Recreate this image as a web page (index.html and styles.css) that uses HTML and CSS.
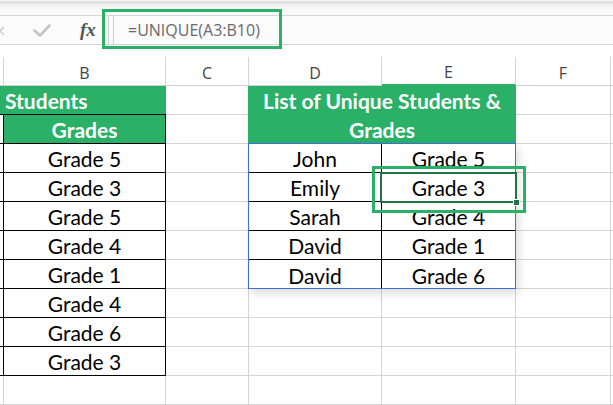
FILE: index.html
```html
<!DOCTYPE html>
<html>
<head>
<meta charset="utf-8">
<link rel="stylesheet" href="styles.css">
</head>
<body>
<div class="ribbon-edge"></div>
<div class="formula-bar">
  <div class="fb-icons">
    <svg class="ic-x" width="10" height="10" viewBox="0 0 10 10"><path d="M1 1 L9 9 M9 1 L1 9" stroke="#cfcfcf" stroke-width="1.6" fill="none"/></svg>
    <svg class="ic-check" width="18" height="13" viewBox="0 0 18 13"><path d="M1.5 6.5 L7 11.5 L16.5 1.5" stroke="#c4c4c4" stroke-width="2.6" fill="none" stroke-linecap="round" stroke-linejoin="round"/></svg>
    <span class="fx">fx</span>
  </div>
  <div class="fb-sep"></div>
  <div class="fb-input">=UNIQUE(A3:B10)</div>
  <div class="annot annot-formula"></div>
</div>
<div class="gap"></div>
<div class="col-headers">
  <div class="ch"></div>
  <div class="ch">B</div>
  <div class="ch">C</div>
  <div class="ch">D</div>
  <div class="ch ch-sel">E</div>
  <div class="ch">F</div>
  <div class="ch ch-last"></div>
</div>
<div class="sheet">
  <div class="students">Students</div>
  <div class="left-table">
    <div class="lt-a"></div><div class="lt-b lt-head">Grades</div>
    <div class="lt-a"></div><div class="lt-b">Grade 5</div>
    <div class="lt-a"></div><div class="lt-b">Grade 3</div>
    <div class="lt-a"></div><div class="lt-b">Grade 5</div>
    <div class="lt-a"></div><div class="lt-b">Grade 4</div>
    <div class="lt-a"></div><div class="lt-b">Grade 1</div>
    <div class="lt-a"></div><div class="lt-b">Grade 4</div>
    <div class="lt-a"></div><div class="lt-b">Grade 6</div>
    <div class="lt-a"></div><div class="lt-b">Grade 3</div>
  </div>
  <div class="ut-title">List of Unique Students &amp;<br>Grades</div>
  <div class="ut-data">
    <div class="ut-cell ut-name">John</div><div class="ut-cell">Grade 5</div>
    <div class="ut-cell ut-name">Emily</div><div class="ut-cell">Grade 3</div>
    <div class="ut-cell ut-name">Sarah</div><div class="ut-cell">Grade 4</div>
    <div class="ut-cell ut-name">David</div><div class="ut-cell">Grade 1</div>
    <div class="ut-cell ut-name ut-last">David</div><div class="ut-cell ut-last">Grade 6</div>
  </div>
  <div class="sel-cell"><div class="fill-handle"></div></div>
  <div class="annot annot-cell"></div>
</div>
</body>
</html>
```
FILE: styles.css
```css
* { box-sizing: border-box; }
html, body {
  margin: 0;
  padding: 0;
  width: 613px;
  height: 405px;
  overflow: hidden;
  background: #ffffff;
}
body {
  font-family: "Lato", "Open Sans", sans-serif;
  position: relative;
}

.ribbon-edge {
  height: 15px;
  background: linear-gradient(to bottom, #ffffff 0, #d8d8d8 2px, #ececec 4px, #f9f9f9 9px, #fdfdfd 15px);
}

.formula-bar {
  height: 30px;
  border-top: 1px solid #d5d5d5;
  border-bottom: 1px solid #d5d5d5;
  background: #fbfbfb;
  display: flex;
  align-items: stretch;
}
.fb-icons {
  width: 108px;
  display: flex;
  align-items: center;
}
.ic-x { margin-left: -5px; margin-top: 2px; }
.ic-check { margin-left: 28px; margin-top: 1px; }
.fx {
  margin-left: 29px;
  font-family: "Liberation Serif", serif;
  font-style: italic;
  font-weight: 700;
  font-size: 19px;
  color: #555555;
  line-height: 1;
  margin-top: -1px;
}
.fb-sep {
  width: 6px;
  border-left: 1px solid #cdcdcd;
  border-right: 1px solid #cdcdcd;
}
.fb-input {
  flex: 1;
  padding-left: 14px;
  display: flex;
  align-items: center;
  font-family: "Open Sans", sans-serif;
  font-size: 16px;
  color: #6a6a6a;
}

.annot {
  position: absolute;
  border: 3px solid #2bb067;
}
.annot-formula {
  left: 102px;
  top: 9px;
  width: 180px;
  height: 40px;
}

.gap { height: 12px; }

.col-headers {
  display: grid;
  grid-template-columns: 4px 162px 83px 133px 134px 95px 1fr;
  height: 29px;
}
.ch {
  border-right: 1px solid #d4d4d4;
  border-bottom: 1px solid #cfcfcf;
  display: flex;
  align-items: center;
  justify-content: center;
  font-family: "Open Sans", sans-serif;
  font-size: 16px;
  color: #444444;
  padding-top: 3px;
}
.ch-sel { border-bottom: 2px solid #2bb067; }
.ch-last { border-right: none; }

.sheet {
  position: relative;
  display: grid;
  grid-template-columns: 4px 162px 83px 133px 134px 95px 1fr;
  grid-template-rows: repeat(11, 29px);
  background:
    repeating-linear-gradient(to bottom, transparent 0 28px, #d4d4d4 28px 29px),
    linear-gradient(to right, transparent 0 3px, #d4d4d4 3px 4px, transparent 4px 165px, #d4d4d4 165px 166px, transparent 166px 248px, #d4d4d4 248px 249px, transparent 249px 381px, #d4d4d4 381px 382px, transparent 382px 515px, #d4d4d4 515px 516px, transparent 516px 610px, #d4d4d4 610px 611px, transparent 611px);
  font-size: 21px;
  color: #000000;
}

.students {
  grid-column: 1 / 3;
  grid-row: 1;
  background: #2bb067;
  border-bottom: 1px solid #000000;
  color: #ffffff;
  font-weight: 700;
  padding-left: 5px;
  display: flex;
  align-items: center;
}

.left-table {
  grid-column: 1 / 3;
  grid-row: 2 / 11;
  display: grid;
  grid-template-columns: 4px 162px;
  grid-auto-rows: 29px;
}
.lt-a {
  background: #ffffff;
  border-right: 1px solid #000000;
  border-bottom: 1px solid #000000;
}
.lt-b {
  background: #ffffff;
  border-right: 1px solid #000000;
  border-bottom: 1px solid #000000;
  display: flex;
  align-items: center;
  justify-content: center;
  padding-top: 1px;
}
.lt-head {
  background: #2bb067;
  color: #ffffff;
  font-weight: 700;
}

.ut-title {
  grid-column: 4 / 6;
  grid-row: 1 / 3;
  margin-left: -1px;
  background: #2bb067;
  color: #ffffff;
  font-weight: 700;
  text-align: center;
  line-height: 29px;
  padding-top: 0;
}

.ut-data {
  grid-column: 4 / 6;
  grid-row: 3 / 8;
  margin: -1px 0 0 -1px;
  border: 1px solid #3d70d2;
  background: #ffffff;
  box-shadow: 3px 5px 9px rgba(0, 0, 0, 0.13);
  display: grid;
  grid-template-columns: 133px 133px;
  grid-template-rows: repeat(4, 29px) 28px;
}
.ut-cell {
  border-bottom: 1px solid #000000;
  display: flex;
  align-items: center;
  justify-content: center;
  padding-top: 1px;
}
.ut-name { border-right: 1px solid #000000; }
.ut-last { border-bottom: none; padding-top: 2px; }

.sel-cell {
  grid-column: 5;
  grid-row: 4;
  margin: -1px -1px -1px -2px;
  border: 2px solid #217346;
  position: relative;
}
.fill-handle {
  position: absolute;
  right: -5px;
  bottom: -5px;
  width: 7px;
  height: 7px;
  background: #217346;
  border: 1px solid #ffffff;
}

.annot-cell {
  left: 372px;
  top: 80px;
  width: 154px;
  height: 47px;
}
```
